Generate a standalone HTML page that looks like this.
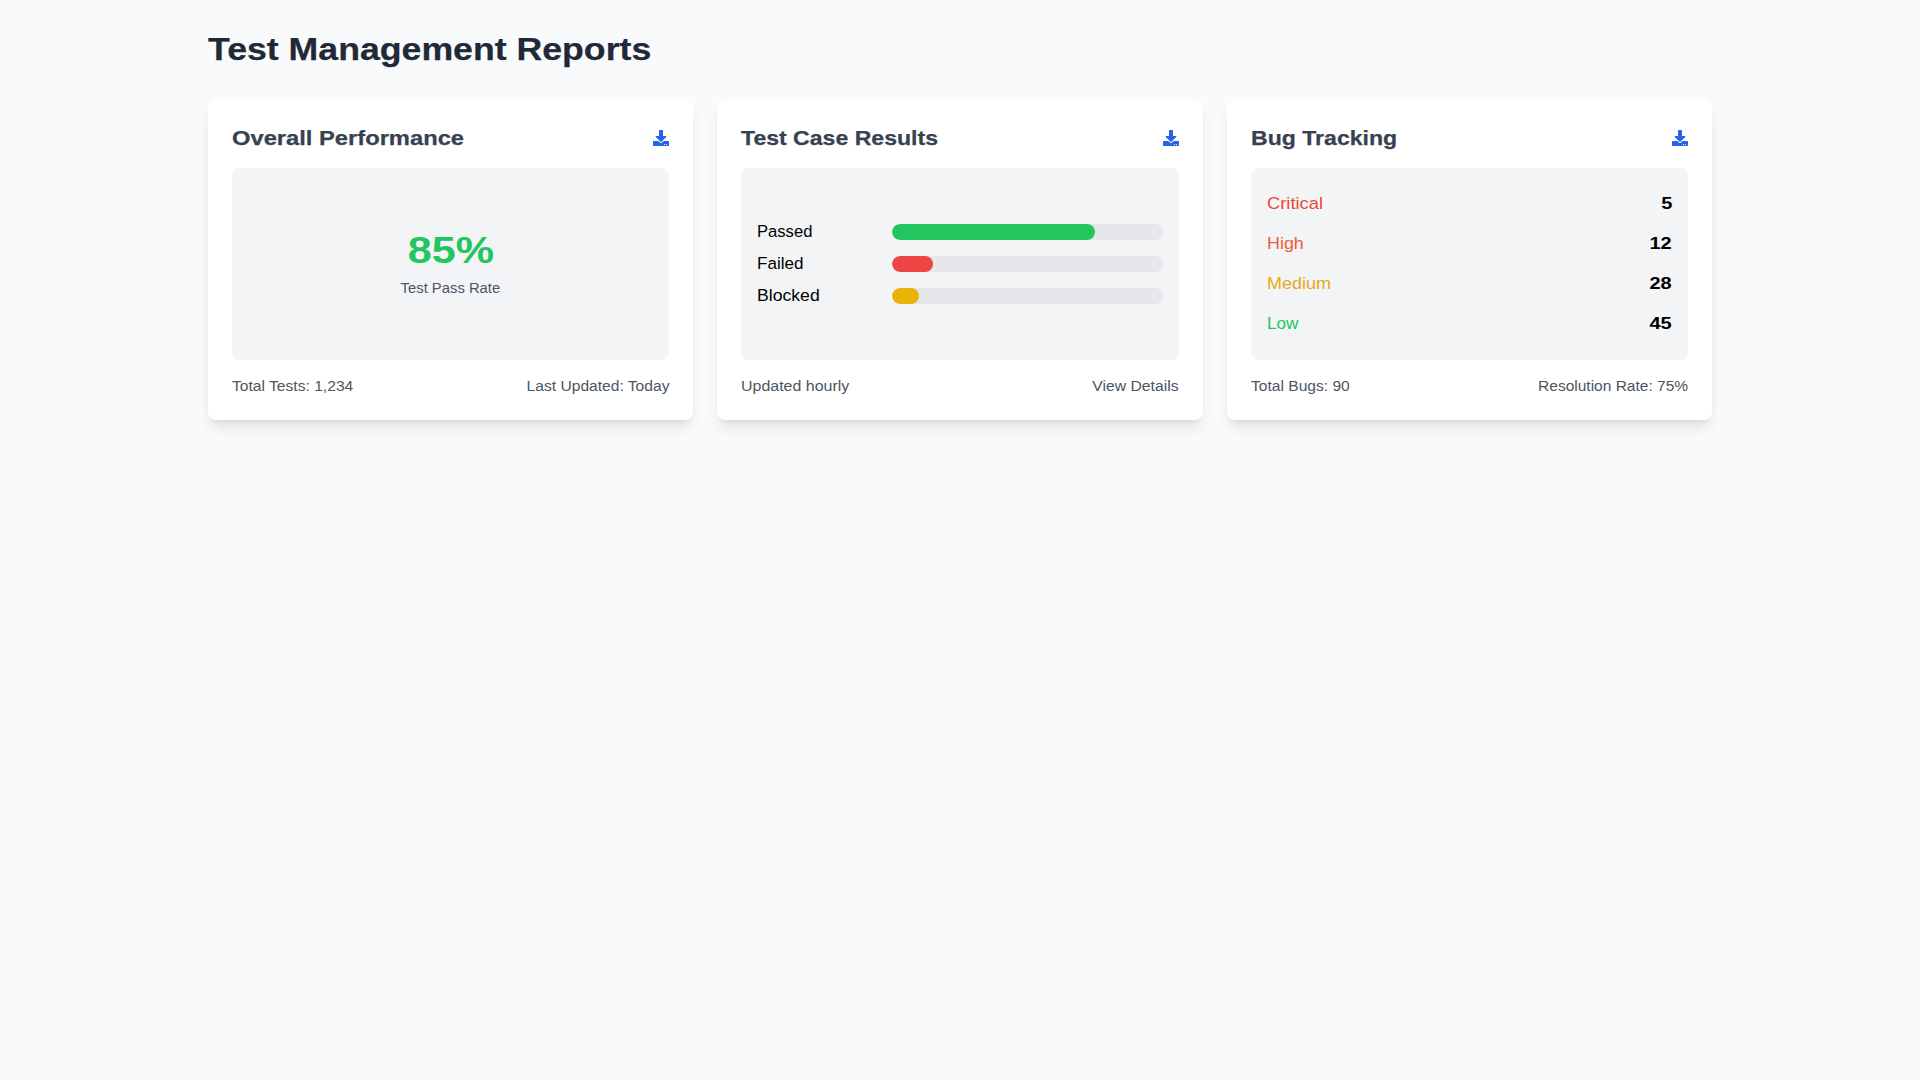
<!DOCTYPE html>
<html>
<head>
<meta charset="utf-8">
<style>
html,body{margin:0;padding:0;}
body{background:#f9fafb;font-family:"Liberation Sans",sans-serif;width:1920px;height:1080px;overflow:hidden;color:#000;}
.wrap{position:relative;padding:32px 208px 0 208px;}
h1{-webkit-text-stroke:0.25px #1f2937;margin:0 0 32px 0;font-size:31.50px;line-height:36px;font-weight:700;color:#1f2937;}
.grid{display:flex;gap:24px;}
.card{flex:1 1 0;min-width:0;background:#fff;border-radius:8px;padding:24px;box-shadow:0 10px 15px -3px rgba(0,0,0,.1),0 4px 6px -4px rgba(0,0,0,.1);}
.hd{display:flex;justify-content:space-between;align-items:center;margin-bottom:16px;height:28px;}
h2{-webkit-text-stroke:0.25px #374151;margin:0;font-size:21.00px;line-height:28px;font-weight:700;color:#374151;}
.ic{width:16px;height:16px;display:block;fill:#2563eb;}
.panel{height:192px;background:#f3f4f6;border-radius:8px;display:flex;align-items:center;justify-content:center;}
.ft{margin-top:16px;display:flex;justify-content:space-between;font-size:14.70px;line-height:20px;color:#4b5563;}
.big{font-size:37.80px;line-height:40px;font-weight:700;color:#22c55e;text-align:center;}
.sub{margin-top:8px;font-size:14.70px;line-height:20px;color:#4b5563;text-align:center;}
.bars{width:100%;padding:0 16px;box-sizing:border-box;}
.row{display:flex;align-items:center;height:24px;}
.row+.row{margin-top:8px;}
.lbl{width:33.3333%;font-size:16.80px;line-height:24px;color:#000;}
.trk{width:66.6667%;height:16px;background:#e5e7eb;border-radius:9999px;overflow:hidden;}
.fill{height:100%;border-radius:9999px;}
.bugs{width:100%;padding:0 16px;box-sizing:border-box;}
.brow{display:flex;justify-content:space-between;height:24px;font-size:16.80px;line-height:24px;}
.brow+.brow{margin-top:16px;}
.num{font-weight:700;color:#000;}
.s{display:inline-block;white-space:nowrap;transform-origin:0 50%;}
.r .s{transform-origin:100% 50%;}
.c .s{transform-origin:50% 50%;}
</style>
</head>
<body>
<div class="wrap">
<h1><span class="s" style="transform:scaleX(1.1322) translateY(-1px)">Test Management Reports</span></h1>
<div class="grid">
  <div class="card">
    <div class="hd"><h2><span class="s" style="transform:scaleX(1.1294)">Overall Performance</span></h2>
      <svg class="ic" viewBox="0 0 512 512"><path d="M216 0h80c13.3 0 24 10.7 24 24v168h87.7c17.8 0 26.7 21.5 14.1 34.1L269.7 378.3c-7.5 7.5-19.8 7.5-27.3 0L90.1 226.1c-12.6-12.6-3.7-34.1 14.1-34.1H192V24c0-13.300 10.7-24 24-24zm296 376v112c0 13.3-10.7 24-24 24H24c-13.3 0-24-10.7-24-24V376c0-13.3 10.7-24 24-24h146.7l49 49c20.1 20.1 52.5 20.1 72.6 0l49-49H488c13.3 0 24 10.7 24 24zm-124 88c0-11-9-20-20-20s-20 9-20 20 9 20 20 20 20-9 20-20zm64 0c0-11-9-20-20-20s-20 9-20 20 9 20 20 20 20-9 20-20z"/></svg>
    </div>
    <div class="panel">
      <div>
        <div class="big c"><span class="s" style="transform:scaleX(1.1390)">85%</span></div>
        <div class="sub c"><span class="s" style="transform:scaleX(1.0079)">Test Pass Rate</span></div>
      </div>
    </div>
    <div class="ft"><span class="s" style="transform:scaleX(1.0633)">Total Tests: 1,234</span><span class="r"><span class="s" style="transform:scaleX(1.0624)">Last Updated: Today</span></span></div>
  </div>
  <div class="card">
    <div class="hd"><h2><span class="s" style="transform:scaleX(1.0984)">Test Case Results</span></h2>
      <svg class="ic" viewBox="0 0 512 512"><path d="M216 0h80c13.3 0 24 10.7 24 24v168h87.7c17.8 0 26.7 21.5 14.1 34.1L269.7 378.3c-7.5 7.5-19.8 7.5-27.3 0L90.1 226.1c-12.6-12.6-3.7-34.1 14.1-34.1H192V24c0-13.300 10.7-24 24-24zm296 376v112c0 13.3-10.7 24-24 24H24c-13.3 0-24-10.7-24-24V376c0-13.3 10.7-24 24-24h146.7l49 49c20.1 20.1 52.5 20.1 72.6 0l49-49H488c13.3 0 24 10.7 24 24zm-124 88c0-11-9-20-20-20s-20 9-20 20 9 20 20 20 20-9 20-20zm64 0c0-11-9-20-20-20s-20 9-20 20 9 20 20 20 20-9 20-20z"/></svg>
    </div>
    <div class="panel">
      <div class="bars">
        <div class="row"><div class="lbl"><span class="s" style="transform:scaleX(0.9897)">Passed</span></div><div class="trk"><div class="fill" style="width:75%;background:#22c55e"></div></div></div>
        <div class="row"><div class="lbl"><span class="s" style="transform:scaleX(1.0157)">Failed</span></div><div class="trk"><div class="fill" style="width:15%;background:#ef4444"></div></div></div>
        <div class="row"><div class="lbl"><span class="s" style="transform:scaleX(1.0502)">Blocked</span></div><div class="trk"><div class="fill" style="width:10%;background:#eab308"></div></div></div>
      </div>
    </div>
    <div class="ft"><span class="s" style="transform:scaleX(1.0869)">Updated hourly</span><span class="r"><span class="s" style="transform:scaleX(1.0704)">View Details</span></span></div>
  </div>
  <div class="card">
    <div class="hd"><h2><span class="s" style="transform:scaleX(1.0985)">Bug Tracking</span></h2>
      <svg class="ic" viewBox="0 0 512 512"><path d="M216 0h80c13.3 0 24 10.7 24 24v168h87.7c17.8 0 26.7 21.5 14.1 34.1L269.7 378.3c-7.5 7.5-19.8 7.5-27.3 0L90.1 226.1c-12.6-12.6-3.7-34.1 14.1-34.1H192V24c0-13.300 10.7-24 24-24zm296 376v112c0 13.3-10.7 24-24 24H24c-13.3 0-24-10.7-24-24V376c0-13.3 10.7-24 24-24h146.7l49 49c20.1 20.1 52.5 20.1 72.6 0l49-49H488c13.3 0 24 10.7 24 24zm-124 88c0-11-9-20-20-20s-20 9-20 20 9 20 20 20 20-9 20-20zm64 0c0-11-9-20-20-20s-20 9-20 20 9 20 20 20 20-9 20-20z"/></svg>
    </div>
    <div class="panel">
      <div class="bugs">
        <div class="brow"><span style="color:#e9473a"><span class="s" style="transform:scaleX(1.0914)">Critical</span></span><span class="num r"><span class="s" style="transform:scaleX(1.1923)">5</span></span></div>
        <div class="brow"><span style="color:#ef5b37"><span class="s" style="transform:scaleX(1.0656)">High</span></span><span class="num r"><span class="s" style="transform:scaleX(1.1925)">12</span></span></div>
        <div class="brow"><span style="color:#e9a918"><span class="s" style="transform:scaleX(1.0720)">Medium</span></span><span class="num r"><span class="s" style="transform:scaleX(1.1925)">28</span></span></div>
        <div class="brow"><span style="color:#22c55e"><span class="s" style="transform:scaleX(1.0233)">Low</span></span><span class="num r"><span class="s" style="transform:scaleX(1.1925)">45</span></span></div>
      </div>
    </div>
    <div class="ft"><span class="s" style="transform:scaleX(1.0613)">Total Bugs: 90</span><span class="r"><span class="s" style="transform:scaleX(1.0558)">Resolution Rate: 75%</span></span></div>
  </div>
</div>
</div>
</body>
</html>
